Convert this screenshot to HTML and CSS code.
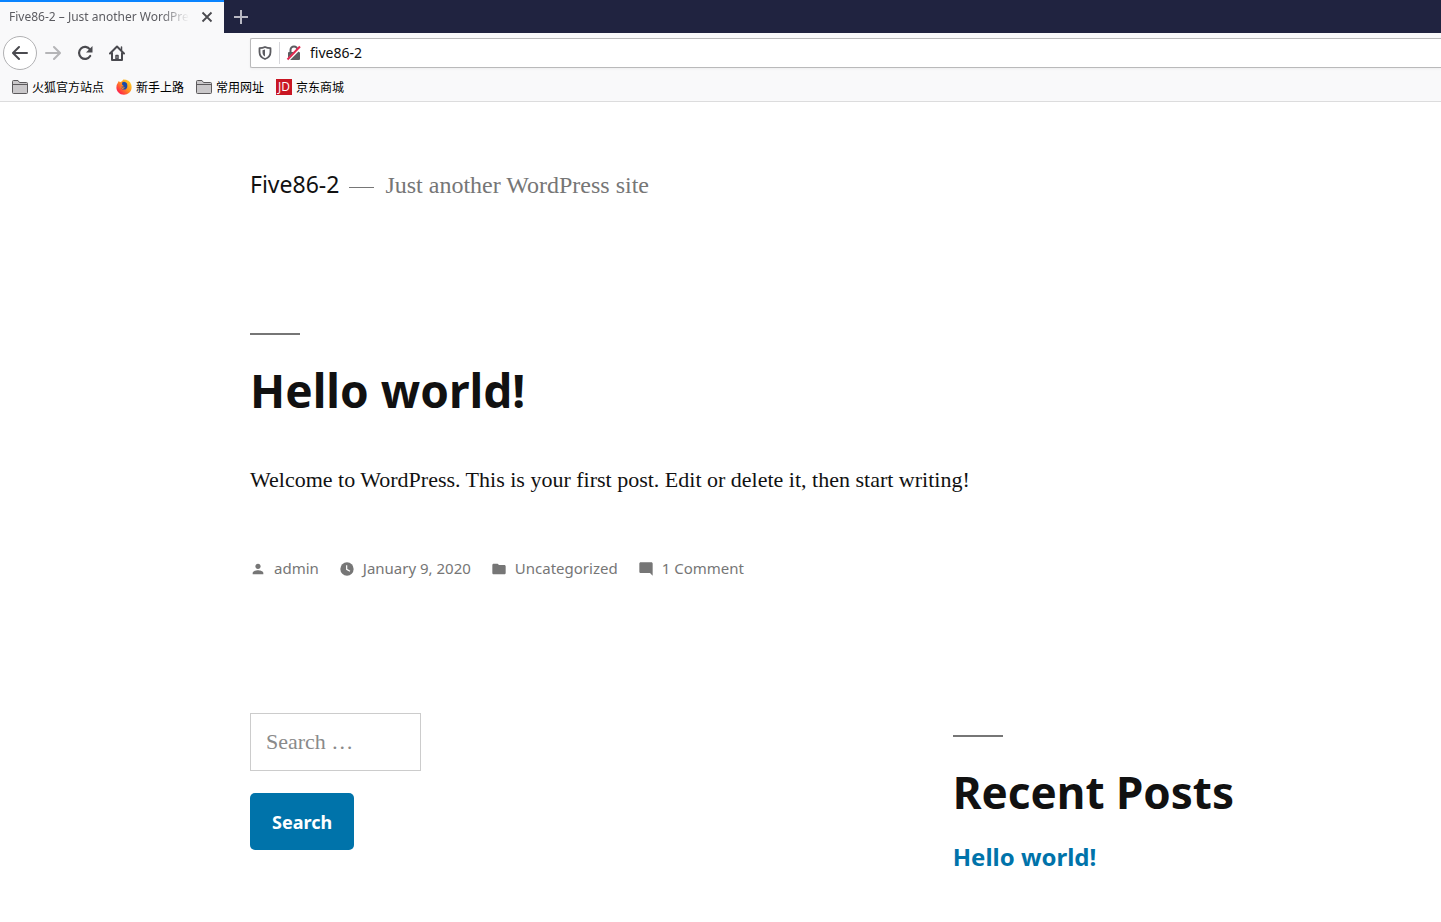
FILE: index.html
```html
<!DOCTYPE html>
<html lang="en">
<head>
<meta charset="utf-8">
<title>Five86-2 – Just another WordPress site</title>
<link rel="stylesheet" href="styles.css">
</head>
<body>
<div class="browser">
  <div class="tabs">
    <div class="tab">
      <span class="tab-title">Five86-2 – Just another WordPre</span>
      <button class="icon-button" aria-label="Close tab"><svg width="12" height="12" viewBox="0 0 12 12"><path d="M1.5 1.5l9 9M10.5 1.5l-9 9" stroke="#4a4a4f" stroke-width="1.8" fill="none"/></svg></button>
    </div>
    <button class="icon-button new-tab" aria-label="New tab"><svg width="14" height="14" viewBox="0 0 14 14"><path d="M7 0v14M0 7h14" stroke="#b9b9c4" stroke-width="2"/></svg></button>
  </div>
  <div class="toolbar">
    <div class="nav-buttons">
      <button class="icon-button back" aria-label="Back"><svg width="16" height="16" viewBox="0 0 16 16" fill="none" stroke="#4a4a4f" stroke-width="2" stroke-linecap="round" stroke-linejoin="round"><path d="M15 8H1.500M7 2L1 8l6 6"/></svg></button>
      <button class="icon-button" aria-label="Forward"><svg width="16" height="16" viewBox="0 0 16 16" fill="none" stroke="#b5b5b7" stroke-width="2" stroke-linecap="round" stroke-linejoin="round"><path d="M1 8h13.500M9 2l6 6-6 6"/></svg></button>
      <button class="icon-button" aria-label="Reload"><svg width="16" height="16" viewBox="0 0 16 16"><path d="M13.200 11A6 6 0 1 1 13 4.500" fill="none" stroke="#4a4a4f" stroke-width="2.200" stroke-linecap="round"/><path d="M15.500 1v6.500H9z" fill="#4a4a4f"/></svg></button>
      <button class="icon-button" aria-label="Home"><svg width="16" height="16" viewBox="0 0 16 16" fill="none" stroke="#4a4a4f" stroke-width="2" stroke-linecap="round" stroke-linejoin="round"><path d="M1 8.500L8 1.500l7 7M3 8v7h10V8"/><path d="M7 10.500h2V14H7z" stroke-width="1.500"/><path d="M12.500 2v3" stroke-width="1.500"/></svg></button>
    </div>
    <div class="address">
      <svg width="14" height="14" viewBox="0 0 14 14"><path d="M7 1C5 2 3 2.200 1.500 2.200V6c0 3.500 2.500 6 5.500 7 3-1 5.500-3.500 5.500-7V2.200C11 2.200 9 2 7 1z" fill="none" stroke="#5c5c61" stroke-width="1.800" stroke-linejoin="round"/><path d="M7 3.500v7C5.200 9.500 4.500 8 4.500 6V4.200z" fill="#5c5c61"/></svg>
      <span class="divider"></span>
      <svg width="16" height="16" viewBox="0 0 16 16"><rect x="2" y="7" width="12" height="8" rx="1" fill="#5c5c61"/><path d="M4.500 8V5a3.500 3.500 0 0 1 7 0v3" fill="none" stroke="#5c5c61" stroke-width="2"/><path d="M2 15L15 2" stroke="#fff" stroke-width="3"/><path d="M1.500 14.500L14 1.500" stroke="#e22850" stroke-width="2"/></svg>
      <input class="url" type="text" value="five86-2" aria-label="Address">
    </div>
  </div>
  <nav class="bookmarks" lang="zh-CN" aria-label="Bookmarks">
    <a href="#"><svg width="16" height="16" viewBox="0 0 16 16"><path d="M.5 13.500V2.500Q.5 1.500 1.500 1.500H6L7.500 3.500H14.500Q15.500 3.500 15.500 4.500V13.500Q15.500 14.500 14.500 14.500H1.500Q.5 14.500.5 13.500z" fill="#cac8ca" stroke="#5c5a5c"/><path d="M1 5.500h14" stroke="#5c5a5c"/></svg>火狐官方站点</a>
    <a href="#"><svg width="16" height="16" viewBox="0 0 16 16">
      <defs><linearGradient id="fire" x1="1" y1="0" x2="0" y2="1"><stop offset="0" stop-color="#ffe12e"/><stop offset=".45" stop-color="#ff9420"/><stop offset=".8" stop-color="#ff3044"/><stop offset="1" stop-color="#ef1b70"/></linearGradient></defs>
      <path d="M2 3.500L2.800 2 4 3.200 6 2.200 7.300.5Q13.500.5 15.200 5.500C17 12 12.500 15.700 8 15.700S.4 12.500.4 8.500Q.4 5.500 2 3.500z" fill="url(#fire)"/><path d="M6.300 3.200Q9 1.800 10.800 4.200C12 7 11.200 10.500 8.500 10.600 6 10.600 4.600 9.700 5 8l3-.8-2-1.700z" fill="#194aa8"/><path d="M4 7.500L6.200 8.500 9 8.300Q8 10.200 6 10z" fill="#ff8a21"/></svg>新手上路</a>
    <a href="#"><svg width="16" height="16" viewBox="0 0 16 16"><path d="M.5 13.500V2.500Q.5 1.500 1.500 1.500H6L7.500 3.500H14.500Q15.500 3.500 15.500 4.500V13.500Q15.500 14.500 14.500 14.500H1.500Q.5 14.500.5 13.500z" fill="#cac8ca" stroke="#5c5a5c"/><path d="M1 5.500h14" stroke="#5c5a5c"/></svg>常用网址</a>
    <a href="#"><span class="jd">JD</span>京东商城</a>
  </nav>
</div>

<div class="site">
  <header class="site-header">
    <a class="site-title" href="#">Five86-2</a>
    <span class="dash"></span>
    <span class="tagline">Just another WordPress site</span>
  </header>
  <main class="entry">
    <h1 class="heading">Hello world!</h1>
    <p class="content">Welcome to WordPress. This is your first post. Edit or delete it, then start writing!</p>
    <footer class="meta">
      <a href="#"><svg width="16" height="16" viewBox="0 0 24 24"><path d="M12 12c2.200 0 4-1.800 4-4s-1.800-4-4-4-4 1.800-4 4 1.800 4 4 4zm0 2c-2.700 0-8 1.300-8 4v2h16v-2c0-2.700-5.300-4-8-4z"/></svg>admin</a>
      <a href="#"><svg width="16" height="16" viewBox="0 0 24 24"><circle cx="12" cy="12" r="10"/><path d="M11.500 6.500v6l5 3" fill="none" stroke="#fff" stroke-width="1.800"/></svg>January 9, 2020</a>
      <a href="#"><svg width="16" height="16" viewBox="0 0 24 24"><path d="M10 4H4c-1.100 0-2 .9-2 2v12c0 1.100.9 2 2 2h16c1.100 0 2-.9 2-2V8c0-1.100-.9-2-2-2h-8z"/></svg>Uncategorized</a>
      <a href="#"><svg width="16" height="16" viewBox="0 0 24 24"><path d="M22 4c0-1.100-.9-2-2-2H4c-1.100 0-2 .9-2 2v12c0 1.100.9 2 2 2h14l4 4z"/></svg>1 Comment</a>
    </footer>
  </main>
  <aside class="widgets">
    <form class="search">
      <input class="search-field" type="search" placeholder="Search …" aria-label="Search for">
      <button class="search-submit" type="button">Search</button>
    </form>
    <section class="recent">
      <h2 class="heading">Recent Posts</h2>
      <a class="recent-link" href="#">Hello world!</a>
    </section>
  </aside>
</div>
</body>
</html>
```
FILE: styles.css
```css
* { box-sizing: border-box; }
body { margin: 0; background: #fff; color: #111; font-family: "Noto Sans", sans-serif; }
a { color: inherit; text-decoration: none; }
svg { display: block; flex: none; }
.icon-button { display: flex; align-items: center; justify-content: center; flex: none; padding: 0; border: 0; background: none; }

.browser { background: #f9f9fa; border-bottom: 1px solid #dcdcdd; font-size: 12px; }
.tabs { display: flex; height: 33px; background: #202340; }
.tab { display: flex; align-items: center; justify-content: space-between; width: 224px; padding: 0 11px 2px 9px; border-top: 2px solid #0a84ff; background: #f9f9fa; }
.tab-title { white-space: nowrap; color: #5c5c61; mask-image: linear-gradient(to left, transparent, #000 28px); }
.new-tab { width: 34px; }
.toolbar { display: flex; align-items: center; height: 40px; }
.nav-buttons { display: flex; align-items: center; width: 250px; padding-left: 3px; }
.nav-buttons .icon-button { width: 32px; height: 32px; }
.nav-buttons .back { width: 34px; height: 34px; border: 1px solid #b1b1b3; border-radius: 50%; background: #fff; }
.address { display: flex; align-items: center; flex: 1; height: 30px; padding-left: 7px; border: 1px solid #b9b9ba; border-right: 0; border-radius: 2px 0 0 2px; background: #fff; box-shadow: 0 1px 3px #0000000d; }
.divider { width: 1px; height: 22px; margin: 0 6px 0 7px; background: #d7d7db; }
.url { flex: 1; padding: 0 0 2px 8px; border: 0; outline: 0; background: none; font: 14px "Noto Sans", sans-serif; color: #0c0c0d; }
.bookmarks { display: flex; align-items: center; gap: 12px; height: 28px; padding-left: 12px; color: #000; font-family: "Noto Sans CJK SC", sans-serif; line-height: 16px; }
.bookmarks a { display: flex; align-items: center; gap: 4px; }
.jd { width: 16px; height: 16px; background: #c91623; color: #fff; font: 12px/16px "Open Sans", sans-serif; text-align: center; }

.site { padding-left: 250px; }
.site-header { display: flex; align-items: center; height: 36px; margin-top: 65px; font-size: 23px; line-height: 32px; }
.site-title { padding-bottom: 2px; }
.dash { width: 25px; height: 1px; margin: 4px 11px 0 10px; background: #767676; }
.tagline { color: #767676; font: 24px "Liberation Serif", serif; }
.entry { padding-top: 130px; }
.heading { margin: 0; font-size: 46px; font-weight: 700; line-height: 58px; }
.heading::before { content: ""; display: block; width: 50px; height: 2px; margin-bottom: 26px; background: #767676; }
.content { margin: 41px 0 0; font: 22px/40px "Liberation Serif", serif; }
.meta { display: flex; gap: 20px; margin-top: 56px; color: #767676; font-size: 15px; line-height: 24px; }
.meta a { display: flex; align-items: center; gap: 8px; }
.meta svg { fill: #767676; margin-top: 2px; }
.widgets { display: grid; grid-template-columns: 59% 1fr; margin-top: 133px; }
.search { display: flex; flex-direction: column; align-items: flex-start; gap: 22px; }
.search-field { width: 171px; height: 58px; padding: 0 15px; border: 1px solid #ccc; border-radius: 0; outline: 0; background: #fff; font: 22px "Liberation Serif", serif; }
.search-field::placeholder { color: #8a8a8a; }
.search-submit { height: 57px; padding: 0 22px; border: 0; border-radius: 5px; background: #0073aa; color: #fff; font: 700 18px "Noto Sans", sans-serif; }
.recent { padding-top: 22px; }
.recent .heading { font-size: 44px; }
.recent-link { display: block; margin-top: 18px; color: #0073aa; font-size: 24px; font-weight: 700; line-height: 36px; }
```
